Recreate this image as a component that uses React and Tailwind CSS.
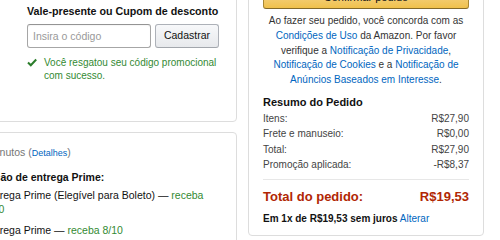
import React from "react";

function CouponBox() {
  return (
    <div className="rounded-[4px] border border-[#dddddd] pb-[39px] pl-[66px] pr-[17px] pt-[39px]">
      <h3 className="whitespace-nowrap text-[10.7px] font-bold leading-[15px] text-[#111]">
        Vale-presente ou Cupom de desconto
      </h3>
      <div className="mt-[5px] flex gap-[4px]">
        <input
          className="h-[24px] w-[124px] rounded-[3px] border border-[#a6a6a6] border-t-[#949494] px-[5px] text-[10.5px] text-[#111] shadow-[inset_0_1px_0_rgba(255,255,255,0.5),inset_0_1px_1px_rgba(0,0,0,0.07)] outline-none placeholder:text-[#999]"
          placeholder="Insira o código"
        />
        <button className="h-[24px] w-[64px] rounded-[3px] border border-[#adb1b8] border-b-[#a2a6ac] bg-gradient-to-b from-[#f7f8fa] to-[#e7e9ec] text-[10.5px] text-[#111]">
          Cadastrar
        </button>
      </div>
      <div className="mt-[8px] flex gap-[7px] text-[10px] leading-[13px] text-[#338a33]">
        <svg width="10" height="13" viewBox="0 0 10 13" className="shrink-0">
          <path d="M1 6.5 L3.8 9.3 L9.2 3.5" fill="none" stroke="#2b7d2b" strokeWidth="2" />
        </svg>
        <p className="whitespace-nowrap">
          Você resgatou seu código promocional
          <br />
          com sucesso.
        </p>
      </div>
    </div>
  );
}

function DeliveryBox() {
  return (
    <div className="mt-[10px] rounded-[4px] border border-[#dddddd] pb-[20px] pl-[19px] pr-[21px] pt-[12px] text-[10.5px] leading-[14px]">
      <p className="-ml-[51px] whitespace-nowrap text-[#767676]">
        Em 1 h e 30 minutos (
        <a className="text-[9px] text-[#0066c0]">Detalhes</a>)
      </p>
      <p className="mt-[10px] font-bold text-[#111]">Opção de entrega Prime:</p>
      <div className="pl-[4px] text-[#111]">
        <p className="mt-[4px]">
          Entrega Prime (Elegível para Boleto) —{" "}
          <span className="text-[#338a33]">receba 8/10</span>
        </p>
        <p className="mt-[7px]">
          Entrega Prime — <span className="text-[#338a33]">receba 8/10</span>
        </p>
      </div>
    </div>
  );
}

function SummaryRow({ label, value }) {
  return (
    <li className="flex justify-between leading-[15.3px]">
      <span>{label}</span>
      <span>{value}</span>
    </li>
  );
}

function OrderBox() {
  return (
    <div className="w-[236px] rounded-[4px] border border-[#dddddd] px-[14px] pb-[9px] pt-[16px]">
      <button className="h-[28px] w-full rounded-[3px] border border-[#a88734] border-b-[#846a29] bg-gradient-to-b from-[#f7dfa5] to-[#f0c14b] pt-[4px] text-[11px] text-[#111]">
        Confirmar pedido
      </button>
      <p className="mt-[5px] whitespace-nowrap text-center text-[10px] leading-[14.8px] text-[#333]">
        Ao fazer seu pedido, você concorda com as
        <br />
        <a className="text-[#0066c0]">Condições de Uso</a> da Amazon. Por favor
        <br />
        verifique a <a className="text-[#0066c0]">Notificação de Privacidade</a>,
        <br />
        <a className="text-[#0066c0]">Notificação de Cookies</a> e a{" "}
        <a className="text-[#0066c0]">Notificação de</a>
        <br />
        <a className="text-[#0066c0]">Anúncios Baseados em Interesse</a>.
      </p>
      <h3 className="mt-[7px] text-[11px] font-bold leading-[14px] text-[#111]">
        Resumo do Pedido
      </h3>
      <ul className="mt-[2px] text-[10px] text-[#444]">
        <SummaryRow label="Itens:" value="R$27,90" />
        <SummaryRow label="Frete e manuseio:" value="R$0,00" />
        <SummaryRow label="Total:" value="R$27,90" />
        <SummaryRow label="Promoção aplicada:" value="-R$8,37" />
      </ul>
      <div className="mt-[7px] border-t border-[#e7e7e7]" />
      <div className="mt-[9px] flex justify-between text-[13px] font-bold leading-[16px] text-[#b12704]">
        <span>Total do pedido:</span>
        <span>R$19,53</span>
      </div>
      <p className="mt-[7px] text-[10px] leading-[14px] text-[#111]">
        <b>Em 1x de R$19,53 sem juros</b>{" "}
        <a className="text-[#0066c0]">Alterar</a>
      </p>
    </div>
  );
}

export default function App() {
  return (
    <div className="h-[240px] w-[500px] overflow-hidden bg-white font-['Liberation_Sans',Arial,sans-serif]">
      <div className="-ml-[40px] -mt-[36px] flex items-start gap-[11px]">
        <div className="w-[277px] shrink-0">
          <CouponBox />
          <DeliveryBox />
        </div>
        <OrderBox />
      </div>
    </div>
  );
}
